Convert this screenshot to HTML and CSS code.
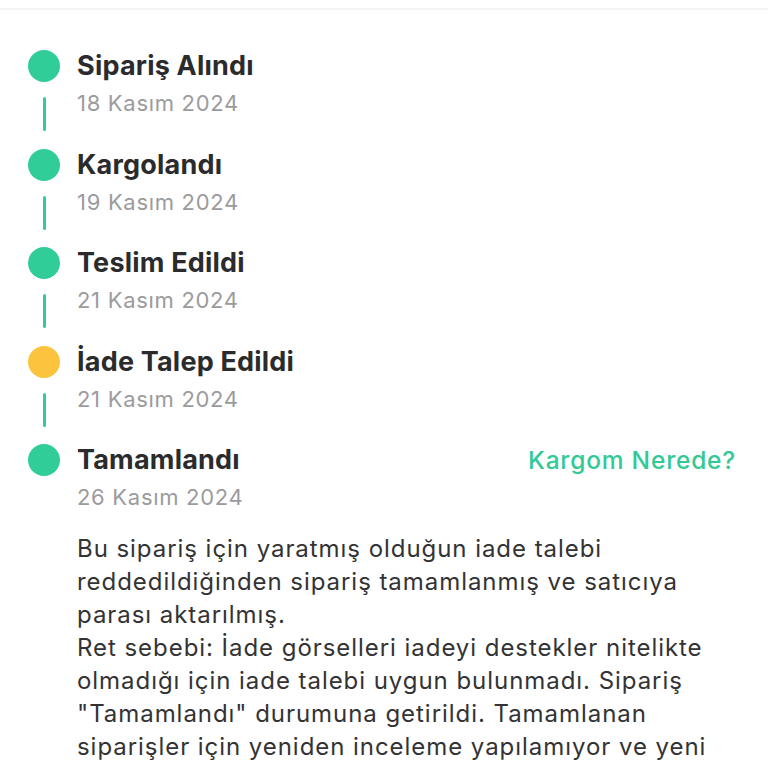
FILE: index.html
```html
<!DOCTYPE html>
<html lang="tr">
<head>
<meta charset="utf-8">
<link rel="stylesheet" href="styles.css">
</head>
<body>
<div class="topbar"></div>
<div class="timeline">
  <div class="step">
    <div class="marker"><span class="dot green"></span><span class="connector"></span></div>
    <div class="info">
      <div class="title">Sipariş Alındı</div>
      <div class="date">18 Kasım 2024</div>
    </div>
  </div>
  <div class="step">
    <div class="marker"><span class="dot green"></span><span class="connector"></span></div>
    <div class="info">
      <div class="title">Kargolandı</div>
      <div class="date">19 Kasım 2024</div>
    </div>
  </div>
  <div class="step">
    <div class="marker"><span class="dot green"></span><span class="connector"></span></div>
    <div class="info">
      <div class="title">Teslim Edildi</div>
      <div class="date">21 Kasım 2024</div>
    </div>
  </div>
  <div class="step">
    <div class="marker"><span class="dot yellow"></span><span class="connector"></span></div>
    <div class="info">
      <div class="title">İade Talep Edildi</div>
      <div class="date">21 Kasım 2024</div>
    </div>
  </div>
  <div class="step last">
    <div class="marker"><span class="dot green"></span></div>
    <div class="info">
      <div class="title-row">
        <div class="title">Tamamlandı</div>
        <a class="track">Kargom Nerede?</a>
      </div>
      <div class="date">26 Kasım 2024</div>
      <p class="desc">Bu sipariş için yaratmış olduğun iade talebi reddedildiğinden sipariş tamamlanmış ve satıcıya parası aktarılmış.<br>Ret sebebi: İade görselleri iadeyi destekler nitelikte olmadığı için iade talebi uygun bulunmadı. Sipariş "Tamamlandı" durumuna getirildi. Tamamlanan siparişler için yeniden inceleme yapılamıyor ve yeni talep oluşturulamıyor.</p>
    </div>
  </div>
</div>
</body>
</html>
```

FILE: styles.css
```css
html, body {
  margin: 0;
  padding: 0;
  background: #ffffff;
  overflow: hidden;
}
body {
  font-family: Inter, "Noto Sans", sans-serif;
  color: #2c2c2e;
  height: 768px;
}
.topbar {
  margin-top: 8px;
  height: 2px;
  background: #f3f3f3;
}
.timeline {
  padding: 40px 32px 0 28px;
}
.step {
  display: grid;
  grid-template-columns: 32px 1fr;
  column-gap: 17px;
  height: 98.5px;
}
.step.last {
  height: auto;
}
.marker {
  display: flex;
  flex-direction: column;
  align-items: center;
}
.dot {
  width: 32px;
  height: 32px;
  border-radius: 50%;
  display: block;
}
.dot.green { background: #31cd98; }
.dot.yellow { background: #fcc43e; }
.connector {
  display: block;
  width: 3px;
  height: 34px;
  margin-top: 15px;
  border-radius: 2px;
  background: #31cd98;
}
.title {
  font-size: 27px;
  font-weight: 700;
  line-height: 32px;
  color: #2b2b2d;
  letter-spacing: 0.2px;
}
.title-row {
  display: flex;
  justify-content: space-between;
  align-items: center;
}
.track {
  font-size: 24.5px;
  line-height: 32px;
  color: #33c996;
  font-weight: 500;
  letter-spacing: 0.8px;
}
.date {
  margin-top: 6px;
  font-size: 22px;
  line-height: 30px;
  color: #9b9b9d;
  letter-spacing: 0.7px;
}
.desc {
  margin: 20px 0 0 0;
  font-size: 24px;
  line-height: 33px;
  color: #333335;
  letter-spacing: 0.95px;
}
```
